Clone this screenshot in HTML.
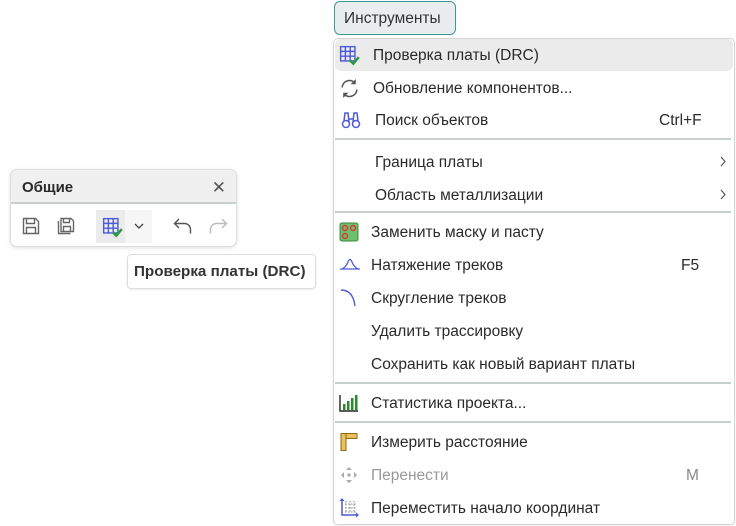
<!DOCTYPE html>
<html><head><meta charset="utf-8"><style>
*{margin:0;padding:0;box-sizing:border-box}
body{width:736px;height:526px;background:#fff;position:relative;overflow:hidden;font-family:"Liberation Sans","DejaVu Sans",sans-serif;color:#2a2a2a;font-size:15.5px}
.abs{position:absolute}
.btn{left:334px;top:1px;width:122px;height:34px;border:1px solid #3a9a9a;border-radius:6px;background:#e9eded;font-size:15.5px;line-height:33px;padding-left:9px;color:#333}
.menu{left:333px;top:38px;width:402px;height:487px;border:1px solid #d5d5d5;border-radius:5px;background:#fff;box-shadow:0 1px 3px rgba(0,0,0,.08)}
.hl{left:335px;top:39px;width:398px;height:32px;background:#ebebeb;border-radius:6px}
.it{position:absolute;left:371px;height:20px;line-height:20px;white-space:nowrap}
.sc{position:absolute;left:659px;line-height:20px}
.sep{position:absolute;left:335px;width:396px;height:2px;background:#c8cfcf}
.arr{position:absolute;left:720px}
.ic{position:absolute;left:339px}
.panel{left:10px;top:169px;width:227px;height:78px;border:1px solid #ddd;border-radius:7px;background:#fff;box-shadow:0 1px 4px rgba(0,0,0,.12);overflow:hidden}
.ph{height:34px;background:#f0f0f0;border-bottom:2px solid #c8cfcf;font-weight:bold;font-size:15px;line-height:35px;padding-left:11px}
.tip{left:127px;top:254px;width:189px;height:35px;border:1px solid #ddd;border-radius:4px;background:#fff;font-weight:bold;font-size:15.2px;line-height:33px;padding-left:6px;color:#333;box-shadow:0 1px 2px rgba(0,0,0,.08)}
</style></head><body>
<div class="abs btn">Инструменты</div>
<div class="abs menu"></div>
<div class="abs hl"></div>

<svg class="ic" style="top:45px" width="22" height="22" viewBox="0 0 20 20"><g fill="none" stroke="#4f5bd5" stroke-width="1.3"><rect x="1.5" y="1.5" width="13" height="13"/><path d="M1.5 5.8h13M1.5 10.2h13M5.8 1.5v13M10.2 1.5v13"/></g><path d="M10 14l3 3 5-6" fill="none" stroke="#2a9a3a" stroke-width="2.2"/></svg>
<div class="it" style="top:46px;left:373px">Проверка платы (DRC)</div>

<svg class="ic" style="top:78px" width="21" height="21" viewBox="0 0 20 20"><g fill="none" stroke="#555" stroke-width="1.5"><path d="M3 9a7 7 0 0 1 12-4.5"/><path d="M17 11a7 7 0 0 1-12 4.5"/></g><path d="M16 1v5h-5z M4 19v-5h5z" fill="#555"/></svg>
<div class="it" style="top:79px;left:373px">Обновление компонентов...</div>

<svg class="ic" style="top:110px;left:341px" width="20" height="20" viewBox="0 0 20 20"><g fill="none" stroke="#4f5bd5" stroke-width="1.5"><circle cx="5" cy="14" r="3.5"/><circle cx="15" cy="14" r="3.5"/><path d="M3 11l1-8h3l1 9M17 11l-1-8h-3l-1 9M8 9h4"/></g></svg>
<div class="it" style="top:111px;left:375px">Поиск объектов</div>
<div class="sc" style="top:111px">Ctrl+F</div>

<div class="sep" style="top:138px"></div>
<div class="it" style="top:153px;left:375px">Граница платы</div><svg class="arr" style="top:156px" width="6" height="11" viewBox="0 0 6 11"><path d="M1 1l4 4.5L1 10" fill="none" stroke="#555" stroke-width="1.2"/></svg>
<div class="it" style="top:186px;left:375px">Область металлизации</div><svg class="arr" style="top:189px" width="6" height="11" viewBox="0 0 6 11"><path d="M1 1l4 4.5L1 10" fill="none" stroke="#555" stroke-width="1.2"/></svg>
<div class="sep" style="top:211px"></div>

<svg class="ic" style="top:222px" width="20" height="20" viewBox="0 0 20 20"><rect x="1" y="1" width="18" height="18" rx="2" fill="#6cc06c" stroke="#3a8a3a"/><g fill="none" stroke="#d33" stroke-width="1.4"><circle cx="6" cy="6" r="2.5"/><circle cx="14" cy="6" r="2.5"/><circle cx="6" cy="14" r="2.5"/></g></svg>
<div class="it" style="top:223px">Заменить маску и пасту</div>

<svg class="ic" style="top:255px" width="22" height="20" viewBox="0 0 22 20"><path d="M1 14h20M3 14q4-2 6-7t4 0q2 5 6 7" fill="none" stroke="#4f5bd5" stroke-width="1.3"/></svg>
<div class="it" style="top:256px">Натяжение треков</div>
<div class="sc" style="top:256px;left:681px">F5</div>

<svg class="ic" style="top:288px" width="20" height="20" viewBox="0 0 20 20"><path d="M2 2q12 0 14 16" fill="none" stroke="#4f5bd5" stroke-width="1.4"/></svg>
<div class="it" style="top:289px">Скругление треков</div>
<div class="it" style="top:322px">Удалить трассировку</div>
<div class="it" style="top:355px">Сохранить как новый вариант платы</div>
<div class="sep" style="top:382px"></div>

<svg class="ic" style="top:393px" width="20" height="20" viewBox="0 0 20 20"><path d="M1 2v16h18" fill="none" stroke="#222" stroke-width="1.4"/><g fill="#2a8a2a"><rect x="4" y="11" width="2.5" height="6"/><rect x="8" y="8" width="2.5" height="9"/><rect x="12" y="5" width="2.5" height="12"/><rect x="16" y="2" width="2.5" height="15"/></g></svg>
<div class="it" style="top:394px">Статистика проекта...</div>
<div class="sep" style="top:421px"></div>

<svg class="ic" style="top:432px" width="20" height="20" viewBox="0 0 20 20"><g fill="#e8c060" stroke="#8a6a10" stroke-width="1"><rect x="2" y="1.5" width="16" height="5"/><rect x="2" y="1.5" width="5" height="17"/></g></svg>
<div class="it" style="top:433px">Измерить расстояние</div>

<svg class="ic" style="top:465px" width="20" height="20" viewBox="0 0 20 20"><g fill="#aaa"><path d="M10 2l3 3h-6zM10 18l3-3h-6zM2 10l3-3v6zM18 10l-3-3v6z"/><circle cx="10" cy="10" r="1.6"/></g></svg>
<div class="it" style="top:466px;color:#999">Перенести</div>
<div class="sc" style="top:466px;left:686px;color:#888">M</div>

<svg class="ic" style="top:498px" width="20" height="20" viewBox="0 0 20 20"><path d="M3 2v15h15" fill="none" stroke="#4f5bd5" stroke-width="1.5"/><path d="M3 0l-2.5 3h5zM20 17l-3-2.5v5z" fill="#4f5bd5"/><g stroke="#888" stroke-dasharray="1.5 1.5"><path d="M7 3v11M11 3v11M15 3v11M6 6h11M6 10h11M6 14h11"/></g></svg>
<div class="it" style="top:499px">Переместить начало координат</div>

<div class="abs panel">
<div class="ph">Общие<span style="position:absolute;right:10px;top:0;font-weight:normal;font-size:17px;color:#555">✕</span></div>
<svg style="position:absolute;left:11px;top:47px" width="18" height="18" viewBox="0 0 18 18"><g fill="none" stroke="#666" stroke-width="1.4"><path d="M1.5 1.5h12l3 3v12h-15z"/><path d="M4.5 1.5v5h8v-5M4.5 16.5v-6h9v6"/></g></svg>
<svg style="position:absolute;left:46px;top:47px" width="18" height="18" viewBox="0 0 18 18"><g fill="none" stroke="#666" stroke-width="1.4"><path d="M4 1.5h10l2.5 2.5v10.5h-12.5z"/><path d="M1.5 4v12.5h12"/><path d="M6.5 1.5v4h6v-4M6.5 14.5v-5h7v5"/></g></svg>
<div style="position:absolute;left:85px;top:40px;width:29px;height:33px;background:#ebebeb"></div>
<div style="position:absolute;left:114px;top:40px;width:27px;height:33px;background:#f6f6f6"></div>
<svg style="position:absolute;left:91px;top:47px" width="22" height="22" viewBox="0 0 20 20"><g fill="none" stroke="#4f5bd5" stroke-width="1.3"><rect x="1.5" y="1.5" width="13" height="13"/><path d="M1.5 5.8h13M1.5 10.2h13M5.8 1.5v13M10.2 1.5v13"/></g><path d="M10 14l3 3 5-6" fill="none" stroke="#2a9a3a" stroke-width="2.2"/></svg>
<svg style="position:absolute;left:123px;top:53px" width="10" height="7" viewBox="0 0 10 7"><path d="M1 1l4 4 4-4" fill="none" stroke="#444" stroke-width="1.3"/></svg>
<svg style="position:absolute;left:162px;top:47px" width="20" height="18" viewBox="0 0 20 18"><path d="M6 2L1.5 6.5 6 11M1.5 6.5h10a6 6 0 0 1 6 6v4" fill="none" stroke="#555" stroke-width="1.4"/></svg>
<svg style="position:absolute;left:197px;top:47px" width="20" height="18" viewBox="0 0 20 18"><path d="M14 2l4.5 4.5L14 11M18.5 6.5h-10a6 6 0 0 0-6 6v4" fill="none" stroke="#bbb" stroke-width="1.4"/></svg>
</div>
<div class="abs tip">Проверка платы (DRC)</div>
</body></html>
